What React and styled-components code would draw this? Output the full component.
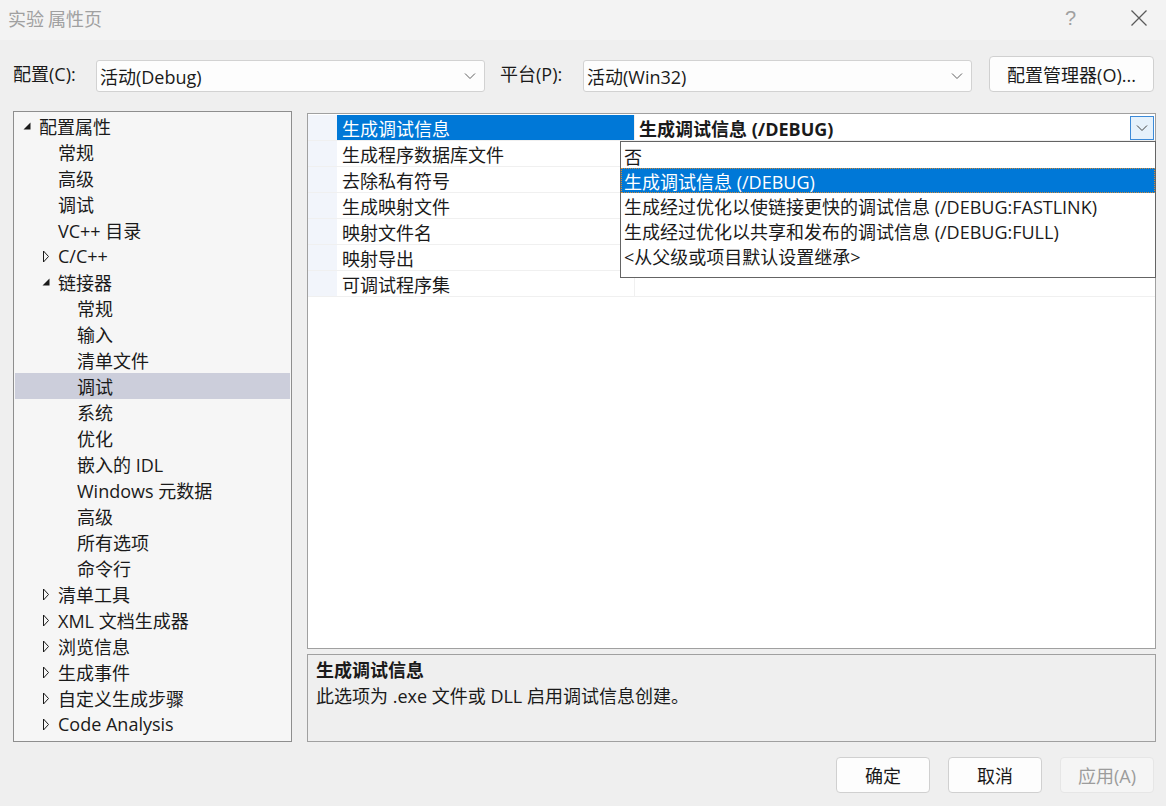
import React from 'react';
import styled, { createGlobalStyle } from 'styled-components';

const GlobalStyle = createGlobalStyle`
  html, body {
    margin: 0;
    padding: 0;
    background: #efefef;
  }
  body {
    font-family: "Open Sans", "Noto Sans CJK SC", sans-serif;
    color: #1a1a1a;
    font-size: 18px;
  }
  * { box-sizing: border-box; }
`;

const TREE = [
    { level: 0, text: '配置属性', arrow: 'open' },
    { level: 1, text: '常规' },
    { level: 1, text: '高级' },
    { level: 1, text: '调试' },
    { level: 1, text: 'VC++ 目录' },
    { level: 1, text: 'C/C++', arrow: 'closed' },
    { level: 1, text: '链接器', arrow: 'open' },
    { level: 2, text: '常规' },
    { level: 2, text: '输入' },
    { level: 2, text: '清单文件' },
    { level: 2, text: '调试', selected: true },
    { level: 2, text: '系统' },
    { level: 2, text: '优化' },
    { level: 2, text: '嵌入的 IDL' },
    { level: 2, text: 'Windows 元数据' },
    { level: 2, text: '高级' },
    { level: 2, text: '所有选项' },
    { level: 2, text: '命令行' },
    { level: 1, text: '清单工具', arrow: 'closed' },
    { level: 1, text: 'XML 文档生成器', arrow: 'closed' },
    { level: 1, text: '浏览信息', arrow: 'closed' },
    { level: 1, text: '生成事件', arrow: 'closed' },
    { level: 1, text: '自定义生成步骤', arrow: 'closed' },
    { level: 1, text: 'Code Analysis', arrow: 'closed' },
];

const PROPS = [
    '生成调试信息',
    '生成程序数据库文件',
    '去除私有符号',
    '生成映射文件',
    '映射文件名',
    '映射导出',
    '可调试程序集',
];

const OPTIONS = [
    '否',
    '生成调试信息 (/DEBUG)',
    '生成经过优化以使链接更快的调试信息 (/DEBUG:FASTLINK)',
    '生成经过优化以共享和发布的调试信息 (/DEBUG:FULL)',
    '<从父级或项目默认设置继承>',
];

const Chevron = ({ color = '#606060' }) => (
    <svg width="12" height="8" viewBox="0 0 12 8">
        <path d="M1 1.5 L6 6.5 L11 1.5" fill="none" stroke={color} strokeWidth="1" />
    </svg>
);

const TreeArrow = ({ kind }) => {
    if (kind === 'open') {
        return (
            <svg width="8" height="8" viewBox="0 0 8 8">
                <path d="M7.5 0.5 L7.5 7.5 L0.5 7.5 Z" fill="#1a1a1a" />
            </svg>
        );
    }
    return (
        <svg width="8" height="13" viewBox="0 0 8 13">
            <path d="M1.5 1 L6.5 6.5 L1.5 12 Z" fill="none" stroke="#1a1a1a" strokeWidth="1" />
        </svg>
    );
};

export default function App() {
    return (
        <>
            <GlobalStyle />
            <Dialog>
                <TitleBar>
                    <Title>实验 属性页</Title>
                    <TitleButtons>
                        <Help>?</Help>
                        <svg width="18" height="18" viewBox="0 0 18 18">
                            <path d="M1.5 1.5 L16.5 16.5 M16.5 1.5 L1.5 16.5" stroke="#5a5a5a" strokeWidth="1.3" />
                        </svg>
                    </TitleButtons>
                </TitleBar>

                <Toolbar>
                    <FieldLabel>配置(C):</FieldLabel>
                    <Select>
                        <span>活动(Debug)</span>
                        <Chevron />
                    </Select>
                    <FieldLabel $gap>平台(P):</FieldLabel>
                    <Select>
                        <span>活动(Win32)</span>
                        <Chevron />
                    </Select>
                    <ManagerButton>配置管理器(O)...</ManagerButton>
                </Toolbar>

                <Main>
                    <TreePanel>
                        {TREE.map((item, i) => (
                            <TreeRow key={i} $selected={item.selected} $level={item.level}>
                                <ArrowSlot>{item.arrow && <TreeArrow kind={item.arrow} />}</ArrowSlot>
                                <span>{item.text}</span>
                            </TreeRow>
                        ))}
                    </TreePanel>

                    <RightColumn>
                        <Grid>
                            {PROPS.map((name, i) => (
                                <PropRow key={name}>
                                    <Gutter />
                                    <NameCell $active={i === 0}>{name}</NameCell>
                                    <ValueCell>
                                        {i === 0 && (
                                            <>
                                                <BoldValue>生成调试信息 (/DEBUG)</BoldValue>
                                                <DropButton>
                                                    <Chevron color="#404040" />
                                                </DropButton>
                                            </>
                                        )}
                                    </ValueCell>
                                </PropRow>
                            ))}
                            <DropList>
                                {OPTIONS.map((opt, i) => (
                                    <Option key={opt} $selected={i === 1}>{opt}</Option>
                                ))}
                            </DropList>
                        </Grid>
                        <Description>
                            <DescTitle>生成调试信息</DescTitle>
                            <DescText>此选项为 .exe 文件或 DLL 启用调试信息创建。</DescText>
                        </Description>
                    </RightColumn>
                </Main>

                <Footer>
                    <DialogButton>确定</DialogButton>
                    <DialogButton>取消</DialogButton>
                    <DialogButton $disabled>应用(A)</DialogButton>
                </Footer>
            </Dialog>
        </>
    );
}

const Dialog = styled.div`
    width: 1166px;
    height: 806px;
    display: flex;
    flex-direction: column;
    background: #efefef;
    overflow: hidden;
`;

const TitleBar = styled.div`
    height: 40px;
    background: #f3f3f3;
    display: flex;
    align-items: center;
    justify-content: space-between;
    padding: 0 18px 4px 8px;
`;

const Title = styled.div`
    font-size: 18px;
    color: #a0a0a0;
    font-family: "Noto Sans CJK SC", sans-serif;
`;

const TitleButtons = styled.div`
    display: flex;
    align-items: center;
    gap: 54px;
`;

const Help = styled.span`
    font-size: 20px;
    color: #a0a0a0;
    font-family: "Liberation Sans", sans-serif;
`;

const Toolbar = styled.div`
    display: flex;
    align-items: center;
    height: 36px;
    margin: 16px 0 19px 13px;
`;

const FieldLabel = styled.div`
    width: 83px;
    margin-left: ${p => (p.$gap ? '15px' : '0')};
    line-height: 24px;
`;

const Select = styled.div`
    width: 389px;
    height: 32px;
    margin-top: 3px;
    background: #fdfdfd;
    border: 1px solid #d2d2d2;
    border-radius: 3px;
    display: flex;
    align-items: center;
    justify-content: space-between;
    padding: 0 8px 0 3px;
`;

const ManagerButton = styled.div`
    margin-left: 17px;
    width: 165px;
    height: 36px;
    border: 1px solid #d0d0d0;
    border-radius: 4px;
    background: #fdfdfd;
    display: flex;
    align-items: center;
    justify-content: center;
`;

const Main = styled.div`
    display: flex;
    gap: 15px;
    height: 631px;
    padding-left: 13px;
`;

const TreePanel = styled.div`
    width: 279px;
    height: 631px;
    border: 1px solid #8e8e8e;
    background: #f6f6f6;
    padding: 1px 1px 0;
`;

const TreeRow = styled.div`
    height: 26px;
    display: flex;
    align-items: center;
    padding-left: ${p => 7 + p.$level * 19}px;
    background: ${p => (p.$selected ? '#cccedb' : 'transparent')};
    white-space: nowrap;
`;

const ArrowSlot = styled.div`
    width: 17px;
    height: 26px;
    display: flex;
    align-items: center;
    padding-left: 1px;
`;

const RightColumn = styled.div`
    width: 849px;
    display: flex;
    flex-direction: column;
    gap: 5px;
    padding-top: 2px;
`;

const Grid = styled.div`
    position: relative;
    height: 537px;
    background: #ffffff;
    border: 1px solid #a0a0a0;
    padding-top: 1px;
`;

const PropRow = styled.div`
    display: flex;
    height: 26px;
    border-bottom: 1px solid #f0f0f0;
`;

const Gutter = styled.div`
    width: 29px;
    background: #f2f5fb;
`;

const NameCell = styled.div`
    width: 298px;
    padding-left: 5px;
    display: flex;
    align-items: center;
    background: ${p => (p.$active ? '#0078d7' : '#ffffff')};
    color: ${p => (p.$active ? '#ffffff' : '#1a1a1a')};
    border-right: 1px solid #f0f0f0;
`;

const ValueCell = styled.div`
    flex: 1;
    display: flex;
    align-items: center;
    justify-content: space-between;
    padding-left: 4px;
`;

const BoldValue = styled.span`
    font-weight: 700;
`;

const DropButton = styled.div`
    width: 24px;
    height: 24px;
    margin-right: 1px;
    border: 1px solid #3c8ad8;
    background: #e5f1fb;
    display: flex;
    align-items: center;
    justify-content: center;
`;

const DropList = styled.div`
    position: absolute;
    left: 312px;
    top: 27px;
    width: 536px;
    height: 137px;
    background: #ffffff;
    border: 1px solid #646464;
    padding-top: 1px;
`;

const Option = styled.div`
    height: 25px;
    display: flex;
    align-items: center;
    padding-left: 3px;
    white-space: nowrap;
    background: ${p => (p.$selected ? '#0078d7' : 'transparent')};
    color: ${p => (p.$selected ? '#ffffff' : '#1a1a1a')};
    outline: ${p => (p.$selected ? '1px dotted #d08a3a' : 'none')};
    outline-offset: -1px;
`;

const Description = styled.div`
    height: 88px;
    border: 1px solid #a0a0a0;
    background: #efefef;
    padding: 2px 8px;
`;

const DescTitle = styled.div`
    font-weight: 700;
    line-height: 26px;
`;

const DescText = styled.div`
    line-height: 26px;
`;

const Footer = styled.div`
    display: flex;
    justify-content: flex-end;
    gap: 18px;
    padding: 15px 12px 0 0;
`;

const DialogButton = styled.div`
    width: 94px;
    height: 36px;
    border-radius: 4px;
    border: 1px solid ${p => (p.$disabled ? '#e6e6e6' : '#d0d0d0')};
    background: ${p => (p.$disabled ? '#f5f5f5' : '#fdfdfd')};
    color: ${p => (p.$disabled ? '#9c9c9c' : '#1a1a1a')};
    display: flex;
    align-items: center;
    justify-content: center;
`;
